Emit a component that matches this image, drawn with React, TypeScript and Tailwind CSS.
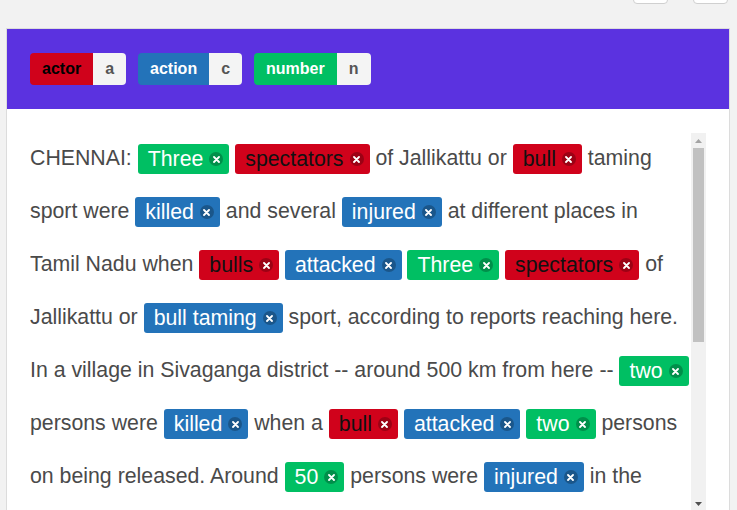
type Kind = "actor" | "action" | "number";

type Piece = string | { text: string; kind: Kind };

const labels: { kind: Kind; name: string; hotkey: string }[] = [
  { kind: "actor", name: "actor", hotkey: "a" },
  { kind: "action", name: "action", hotkey: "c" },
  { kind: "number", name: "number", hotkey: "n" },
];

const labelClass: Record<Kind, string> = {
  actor: "bg-[#d0021b] text-black",
  action: "bg-[#2373b9] text-white",
  number: "bg-[#00bf63] text-white",
};

const tag = (text: string, kind: Kind): Piece => ({ text, kind });

const story: Piece[] = [
  "CHENNAI: ",
  tag("Three", "number"),
  " ",
  tag("spectators", "actor"),
  " of Jallikattu or ",
  tag("bull", "actor"),
  " taming sport were ",
  tag("killed", "action"),
  " and several ",
  tag("injured", "action"),
  " at different places in Tamil Nadu when ",
  tag("bulls", "actor"),
  " ",
  tag("attacked", "action"),
  " ",
  tag("Three", "number"),
  " ",
  tag("spectators", "actor"),
  " of Jallikattu or ",
  tag("bull taming", "action"),
  " sport, according to reports reaching here. In a village in Sivaganga district -- around 500 km from here -- ",
  tag("two", "number"),
  " persons were ",
  tag("killed", "action"),
  " when a ",
  tag("bull", "actor"),
  " ",
  tag("attacked", "action"),
  " ",
  tag("two", "number"),
  " persons on being released. Around ",
  tag("50", "number"),
  " persons were ",
  tag("injured", "action"),
  " in the melee, police said. Most of them were discharged after first aid at the local hospital.",
];

function Tag({ text, kind }: { text: string; kind: Kind }) {
  return (
    <span
      className={`inline-flex h-[30px] items-center gap-[6px] rounded-[3px] pl-[10px] pr-[6px] align-middle leading-none ${labelClass[kind]}`}
    >
      <span className={kind === "actor" ? "text-[#111]" : "text-white"}>{text}</span>
      <span className="flex h-[14px] w-[14px] items-center justify-center rounded-full bg-black/25">
        <svg width="7" height="7" viewBox="0 0 7 7">
          <path d="M1 1 L6 6 M6 1 L1 6" stroke="white" strokeWidth="1.8" strokeLinecap="round" />
        </svg>
      </span>
    </span>
  );
}

function Scrollbar() {
  return (
    <div className="flex h-full w-[15px] shrink-0 flex-col items-center bg-[#f1f1f1]">
      <div className="flex h-[15px] w-full items-center justify-center">
        <svg width="7" height="4" viewBox="0 0 7 4">
          <path d="M3.5 0 L7 4 L0 4 Z" fill="#a3a3a3" />
        </svg>
      </div>
      <div className="h-[194px] w-[11px] bg-[#c1c1c1]" />
      <div className="flex-1" />
      <div className="flex h-[15px] w-full items-center justify-center">
        <svg width="7" height="4" viewBox="0 0 7 4">
          <path d="M0 0 L7 0 L3.5 4 Z" fill="#505050" />
        </svg>
      </div>
    </div>
  );
}

export default function App() {
  return (
    <div className="h-[510px] overflow-hidden bg-[#f2f2f2] font-['Liberation_Sans',Arial,sans-serif]">
      <div className="flex justify-end gap-[25px] pr-[9px]">
        <div className="-mt-[30px] h-[34px] w-[35px] rounded-[4px] border border-[#d0d0d0] bg-white" />
        <div className="-mt-[30px] h-[34px] w-[35px] rounded-[4px] border border-[#d0d0d0] bg-white" />
      </div>

      <div className="ml-[6px] mt-[24px] w-[724px] border border-[#dcdcdc] bg-white">
        <div className="flex gap-3 bg-[#5b32e0] px-[23px] py-[24px]">
          {labels.map((l) => (
            <div key={l.kind} className="flex h-[32px] overflow-hidden rounded-[4px] text-[16px] font-bold leading-none">
              <span className={`flex items-center px-3 ${labelClass[l.kind]}`}>{l.name}</span>
              <span className="flex items-center bg-[#f4f4f4] px-3 text-[#555]">{l.hotkey}</span>
            </div>
          ))}
        </div>

        <div className="flex h-[402px] px-[23px] pt-[24px]">
          <div className="h-[378px] flex-1 overflow-hidden">
            <p className="-mt-[1px] text-[21.3px] leading-[53px] text-[#4a4a4a]">
              {story.map((p, i) =>
                typeof p === "string" ? <span key={i}>{p}</span> : <Tag key={i} text={p.text} kind={p.kind} />
              )}
            </p>
          </div>
          <div className="h-[378px]">
            <Scrollbar />
          </div>
        </div>
      </div>
    </div>
  );
}
